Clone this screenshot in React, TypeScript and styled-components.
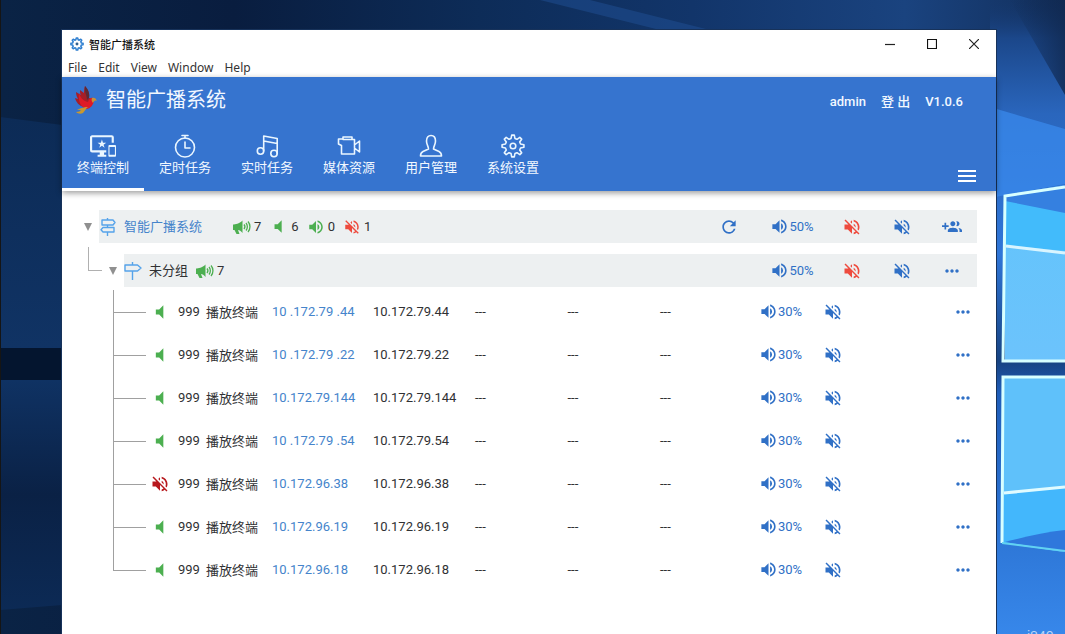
import React from "react";
import styled, { createGlobalStyle } from "styled-components";
import { MdImportantDevices, MdMoreHoriz, MdRefresh, MdVolumeMute, MdVolumeOff, MdVolumeUp } from "react-icons/md";

const BLUE = "#3674cf";
const LINK = "#4584cb";
const ACTION = "#3070c6";
const GREEN = "#4caf50";
const RED = "#ee4b3e";

const GlobalStyle = createGlobalStyle`
  * { box-sizing: border-box; }
  body { margin: 0; font-family: Roboto, "Noto Sans CJK SC", sans-serif; font-size: 13px; color: #303133; }
  button { font: inherit; color: inherit; border: 0; padding: 0; background: none; cursor: pointer; }
  h1 { margin: 0; }
  a { text-decoration: none; }
  svg { display: block; flex: none; }
`;

const Desktop = styled.div`
  position: relative;
  display: flex;
  height: 100vh;
  overflow: hidden;
  padding: 30px 69px 0 62px;
  background: #0a2a56;
`;

const Wallpaper = styled.svg`
  position: absolute;
  inset: 0;
  width: 100%;
  height: 100%;
`;

const Window = styled.main`
  position: relative;
  flex: 1;
  min-width: 0;
  display: flex;
  flex-direction: column;
  background: #fff;
  box-shadow: 0 0 0 1px #17325a;
`;

const TitleBar = styled.div`
  display: flex;
  align-items: center;
  height: 28px;
  padding-left: 8px;
  gap: 5px;
  color: #111;
  font-size: 11px;
  font-weight: 500;
`;

const Title = styled.span`
  flex: 1;
`;

const WindowButtons = styled.div`
  display: flex;
  padding-right: 1px;
`;

const WindowButton = styled.button`
  display: flex;
  align-items: center;
  justify-content: center;
  width: 42px;
  height: 28px;
`;

const MenuBar = styled.nav`
  display: flex;
  align-items: center;
  height: 19px;
  padding-left: 6px;
  gap: 11px;
  font-family: "Noto Sans", "Open Sans", sans-serif;
  font-size: 12px;
  line-height: 18px;
  color: #333;
`;

const Header = styled.header`
  position: relative;
  display: flex;
  flex-direction: column;
  height: 114px;
  background: ${BLUE};
  color: #f2f8ff;
  box-shadow: 0 2px 6px rgba(0, 0, 0, 0.4);
`;

const Brand = styled.div`
  display: flex;
  align-items: center;
  height: 46px;
  padding: 0 33px 0 12px;
`;

const BrandName = styled.h1`
  flex: 1;
  padding-left: 8px;
  font-size: 20px;
  font-weight: 400;
  line-height: 24px;
`;

const Account = styled.div`
  display: flex;
  align-items: baseline;
  gap: 15px;
  font-weight: 500;
`;

const Toolbar = styled.div`
  display: flex;
  flex: 1;
  justify-content: space-between;
`;

const Tabs = styled.div`
  display: flex;
`;

const Tab = styled.button<{ $active?: boolean }>`
  display: flex;
  flex-direction: column;
  align-items: center;
  width: 82px;
  padding-top: 10px;
  line-height: 18px;
  border-bottom: 3px solid ${(p) => (p.$active ? "#fff" : "transparent")};
`;

const MenuToggle = styled.button`
  align-self: flex-end;
  padding: 0 20px 9px;
`;

const Content = styled.section`
  padding: 19px 19px 0 20px;
`;

const GroupRow = styled.div`
  display: flex;
  gap: 5px;
`;

const SubTree = styled.div`
  display: flex;
  gap: 5px;
  margin-top: 4px;
  padding-left: 6px;

  ${GroupRow} {
    flex: 1;
    margin-top: 7px;
  }
`;

const Caret = styled.button`
  width: 12px;
  height: 33px;
  display: flex;
  align-items: center;
  justify-content: center;
`;

const Elbow = styled.span`
  width: 14px;
  height: 24px;
  border-left: 1px solid #b0b0b0;
  border-bottom: 1px solid #b0b0b0;
`;

const Bar = styled.div`
  flex: 1;
  display: flex;
  align-items: center;
  height: 33px;
  background: #edf0f1;
`;

const GroupName = styled.span<{ $link?: boolean }>`
  padding: 0 8px 0 7px;
  line-height: 18px;
  color: ${(p) => (p.$link ? LINK : "#303133")};
`;

const Counts = styled.div<{ $wide?: boolean }>`
  flex: 1;
  display: flex;
  align-items: center;
  gap: 8px;
  padding-left: ${(p) => (p.$wide ? 23 : 0)}px;
`;

const Count = styled.span`
  display: flex;
  align-items: center;
  gap: 3px;
  font-size: 13px;
`;

const Action = styled.button<{ $width?: number; $tone?: string }>`
  display: flex;
  align-items: center;
  justify-content: center;
  width: ${(p) => p.$width ?? 50}px;
  height: 33px;
  color: ${(p) => p.$tone ?? ACTION};
`;

const Devices = styled.table`
  width: calc(100% - 31px);
  margin: 3px 0 0 31px;
  table-layout: fixed;
  border-collapse: collapse;
  td { height: 43px; padding: 0; white-space: nowrap; }
`;

const Branch = styled.div<{ $last: boolean }>`
  height: 43px;
  &::before, &::after { content: ""; display: block; }
  &::before {
    height: 22px;
    border-left: 1px solid #a0a0a0;
    border-bottom: 1px solid #a0a0a0;
  }
  &::after {
    height: 21px;
    border-left: ${(p) => (p.$last ? 0 : 1)}px solid #a0a0a0;
  }
`;

const State = styled.div`
  display: flex;
  padding-left: 4px;
`;

const DeviceLink = styled.a`
  color: ${LINK};
`;

const CellButton = styled.button`
  display: flex;
  align-items: center;
  height: 33px;
  color: ${ACTION};
`;

/** Outline of a cog with the given number of teeth, centred on (c, c). */
function cogPath(teeth: number, c: number, outer: number, inner: number) {
  const step = (Math.PI * 2) / teeth;
  const points: string[] = [];
  for (let i = 0; i < teeth; i++) {
    const middle = i * step - Math.PI / 2;
    const corners: [number, number][] = [
      [-0.32, inner],
      [-0.15, outer],
      [0.15, outer],
      [0.32, inner],
    ];
    corners.forEach(([offset, radius]) => {
      const angle = middle + offset * step;
      points.push(`${(c + radius * Math.cos(angle)).toFixed(2)} ${(c + radius * Math.sin(angle)).toFixed(2)}`);
    });
  }
  return `M${points.join("L")}z`;
}

const AppGear = () => (
  <svg width="14" height="14" viewBox="0 0 24 24" fill="none" stroke="#2f7fd0" strokeWidth="2.6" strokeLinejoin="round">
    <path d={cogPath(8, 12, 10.5, 7.6)} />
    <circle cx="12" cy="12" r="2.5" fill="#2f5f90" stroke="none" />
  </svg>
);

const Phoenix = () => (
  <svg width="24" height="30" viewBox="0 0 24 30">
    <path d="M11 1c-1 3-1 5-1 7L6 5c0 2 0 4 1 5L2 7c0 3 1 5 2 7l-3-1c1 4 4 8 9 9l7-2 2-6-4-1c1-4-1-8-4-12z" fill="#a51e28" />
    <path d="M11 1c3 3 5 7 4 12l-2 2c0-5-3-8-2-14z" fill="#5d2a35" />
    <path d="M5 8c1 4 4 8 9 9 1-3 3-5 5-4l1 3c-1 4-3 7-7 8-6-1-9-7-8-16z" fill="#de1a26" />
    <path d="M18 13c2-1 4 0 5 3-2-1-3 0-4 2-1-1-2-3-1-5z" fill="#c79139" />
    <path d="M14 22c-2 1-3 4-5 6-2 1-5 1-7-1 3 0 4-1 5-2-1 0-3 0-4-1 4 0 6-2 11-2z" fill="#c9982f" />
  </svg>
);

const lineIcon = {
  width: 26,
  height: 26,
  viewBox: "0 0 26 26",
  fill: "none",
  stroke: "#eaf6ff",
  strokeWidth: 1.6,
  strokeLinecap: "round",
  strokeLinejoin: "round",
} as const;

const Stopwatch = () => (
  <svg {...lineIcon}>
    <circle cx="13" cy="14.5" r="9.5" />
    <path d="M10 2.5h6M13 3v2M13 9v6h5" />
  </svg>
);

const Music = () => (
  <svg {...lineIcon}>
    <circle cx="6.5" cy="18" r="3.2" />
    <circle cx="20" cy="20.5" r="3.2" />
    <path d="M9.7 18V3l13.500 2.500v15M9.700 8l13.500 2.500" />
  </svg>
);

const Camera = () => (
  <svg {...lineIcon}>
    <path d="M7 5.500V4h9v2.500h2.500V21H5.500V12.500L2.500 11V6H7M7 6.500h9M18.500 12l5-4v11l-5-4" />
  </svg>
);

const Person = () => (
  <svg {...lineIcon}>
    <path d="M10.500 16c0-3-2-4-2-8 0-4 2-5.500 4.500-5.500s4.500 1.500 4.500 5.500c0 4-2 5-2 8l5.500 2.500c2 1 2.500 2 2.500 4.500H2.500c0-2.500.5-3.500 2.500-4.500z" />
  </svg>
);

const Gear = () => (
  <svg {...lineIcon}>
    <path d={cogPath(8, 13, 11, 7.800)} />
    <circle cx="13" cy="13" r="2.800" />
  </svg>
);

const Megaphone = () => (
  <svg width="18" height="16" viewBox="0 0 18 16">
    <path d="M0 5.500c2.500-.3 6-.5 9.500-4v12.500c-1.500-2-3-2.800-4.500-3L6.500 15H3.500L1.500 11H0z" fill={GREEN} />
    <path d="M11 5.500c1 1.200 1 3.300 0 4.500M13 4c1.800 2 1.800 5.500 0 7.500M15 2.500c2.600 3 2.600 7.500 0 10.500" fill="none" stroke={GREEN} strokeWidth="1.300" />
  </svg>
);

const Signpost = ({ double }: { double?: boolean }) => (
  <svg width="18" height="18" viewBox="0 0 18 18" fill="none" stroke="#55a3ea" strokeWidth="1.4" strokeLinejoin="round">
    {double ? (
      <path d="M8.500 0v2M3 2h11l2 2.500L14 7H3zM8.500 7v2.500M15 9.500H4l-2 2.200L4 14h11zM8.500 14v4" />
    ) : (
      <path d="M8.500 0v3M1 3h12.500L17 6l-3.500 3H1zM8.500 9v9" />
    )}
  </svg>
);

const GroupAdd = () => (
  <svg width="20" height="20" viewBox="0 0 24 24" fill="currentColor">
    <path d="M8 10H5V7H3v3H0v2h3v3h2v-3h3v-2zm10 1c1.660 0 2.990-1.340 2.990-3S19.660 5 18 5c-.32 0-.63.05-.91.14.57.81.9 1.790.9 2.860s-.34 2.040-.9 2.860c.28.09.59.14.91.14zm-5 0c1.660 0 2.990-1.340 2.990-3S14.660 5 13 5s-3 1.340-3 3 1.340 3 3 3zm6.620 2.160c.83.73 1.380 1.660 1.380 2.840v2h3v-2c0-1.540-2.370-2.490-4.380-2.840zM13 13c-2 0-6 1-6 3v2h12v-2c0-2-4-3-6-3z" />
  </svg>
);

const CaretIcon = () => (
  <svg width="10" height="8" viewBox="0 0 10 8">
    <path d="M1 0h8L5 8z" fill="#909090" />
  </svg>
);

const Landscape = () => (
  <Wallpaper viewBox="0 0 1065 634" preserveAspectRatio="none" aria-hidden="true">
    <defs>
      <linearGradient id="sky">
        <stop offset="0" stopColor="#0a2345" />
        <stop offset=".22" stopColor="#091d3f" />
        <stop offset=".45" stopColor="#0d2c58" />
        <stop offset=".65" stopColor="#12356a" />
        <stop offset=".85" stopColor="#1a437f" />
        <stop offset="1" stopColor="#122f5c" />
      </linearGradient>
      <linearGradient id="left" x1="0" y1="0" x2="0" y2="1">
        <stop offset="0" stopColor="#0c2b56" />
        <stop offset="1" stopColor="#103364" />
      </linearGradient>
      <linearGradient id="leftLow" x1="0" y1="0" x2="0" y2="1">
        <stop offset="0" stopColor="#0f3263" />
        <stop offset=".5" stopColor="#0a2145" />
        <stop offset="1" stopColor="#0c2a55" />
      </linearGradient>
      <linearGradient id="right" x1="0" y1="0" x2="0" y2="1">
        <stop offset="0" stopColor="#15376d" stopOpacity="0" />
        <stop offset=".06" stopColor="#1b478a" />
        <stop offset=".18" stopColor="#2a66bd" />
        <stop offset=".4" stopColor="#2f76d8" />
        <stop offset=".57" stopColor="#174382" />
        <stop offset=".62" stopColor="#1f5db9" />
        <stop offset="1" stopColor="#3787ea" />
      </linearGradient>
      <linearGradient id="pane" x1="0" y1="0" x2="0" y2="1">
        <stop offset="0" stopColor="#62c4fb" />
        <stop offset="1" stopColor="#6cc3fc" />
      </linearGradient>
      <linearGradient id="dusk" x1="0" y1="0" x2="1" y2="0">
        <stop offset="0" stopColor="#10284f" stopOpacity="0" />
        <stop offset="1" stopColor="#10284f" stopOpacity=".8" />
      </linearGradient>
    </defs>
    <rect width="1065" height="634" fill="url(#sky)" />
    <path d="M540 0l120 30h50L590 0z" fill="#1f5096" opacity=".5" />
    <path d="M0 117l62 8v223H0z" fill="url(#left)" />
    <path d="M0 348h62v32H0z" fill="#04152f" />
    <path d="M0 380h62v225l-62 5z" fill="url(#leftLow)" />
    <path d="M0 0h1v634H0z" fill="#151515" />
    <path d="M990 0h75v634h-75z" fill="url(#right)" />
    <path d="M1010 0h55v95z" fill="url(#dusk)" />
    <path d="M990 107l75 22v55l-75 14z" fill="#3a8cf0" opacity=".7" />
    <path d="M1005 195l60-10v177h-60z" fill="url(#pane)" />
    <path d="M1005 195l60-10v30l-60-13z" fill="#3580e0" />
    <path d="M1005 201l60 12v38l-60-6z" fill="#42bbfb" />
    <path d="M1006 246l59 7" stroke="#d9f5ff" strokeWidth="3" />
    <path d="M1065 187l-60 9-2 165h62" fill="none" stroke="#d8ffff" strokeWidth="3" />
    <path d="M1003 377h62v175l-62-9z" fill="#5fc1fa" />
    <path d="M1003 493l62-7v66l-62-9z" fill="#43b7fc" />
    <path d="M1005 542c20-5 40-10 60-12v22z" fill="#2f78dc" />
    <path d="M1004 493l61-6" stroke="#e0fbff" strokeWidth="3" />
    <path d="M1065 377h-62l-1 166" fill="none" stroke="#d8ffff" strokeWidth="3" />
    <path d="M1002 543l63 8" stroke="#62d2f2" strokeWidth="2" />
    <text x="1027" y="641" fontSize="14" fontFamily="Liberation Sans, sans-serif" fill="#b8d4f6">i840</text>
  </Wallpaper>
);

const tabs = [
  { label: "终端控制", icon: <MdImportantDevices size={26} color="#eaf6ff" /> },
  { label: "定时任务", icon: <Stopwatch /> },
  { label: "实时任务", icon: <Music /> },
  { label: "媒体资源", icon: <Camera /> },
  { label: "用户管理", icon: <Person /> },
  { label: "系统设置", icon: <Gear /> },
];

const devices = [
  { name: "10 .172.79 .44", ip: "10.172.79.44" },
  { name: "10 .172.79 .22", ip: "10.172.79.22" },
  { name: "10.172.79.144", ip: "10.172.79.144" },
  { name: "10 .172.79 .54", ip: "10.172.79.54" },
  { name: "10.172.96.38", ip: "10.172.96.38", muted: true },
  { name: "10.172.96.19", ip: "10.172.96.19" },
  { name: "10.172.96.18", ip: "10.172.96.18" },
];

const columns = [33, 32, 28, 66, 101, 102, undefined, undefined, 99, 64, 130, 24];

const GroupActions = () => (
  <>
    <Action $width={70}>
      <MdVolumeUp size={19} />
      50%
    </Action>
    <Action $tone={RED} aria-label="静音">
      <MdVolumeOff size={20} />
    </Action>
    <Action aria-label="取消静音">
      <MdVolumeOff size={20} />
    </Action>
  </>
);

export default function App() {
  return (
    <Desktop>
      <GlobalStyle />
      <Landscape />
      <Window>
        <TitleBar>
          <AppGear />
          <Title>智能广播系统</Title>
          <WindowButtons>
            <WindowButton aria-label="最小化">
              <svg width="10" height="10" stroke="#222" strokeWidth="1.2"><path d="M0 5.500h10" /></svg>
            </WindowButton>
            <WindowButton aria-label="最大化">
              <svg width="10" height="10" fill="none" stroke="#111" strokeWidth="1.2"><path d="M.5.5h9v9h-9z" /></svg>
            </WindowButton>
            <WindowButton aria-label="关闭">
              <svg width="10" height="10" stroke="#222" strokeWidth="1.2"><path d="M0 0l10 10M10 0L0 10" /></svg>
            </WindowButton>
          </WindowButtons>
        </TitleBar>
        <MenuBar>
          {["File", "Edit", "View", "Window", "Help"].map((item) => (
            <button key={item}>{item}</button>
          ))}
        </MenuBar>
        <Header>
          <Brand>
            <Phoenix />
            <BrandName>智能广播系统</BrandName>
            <Account>
              <span>admin</span>
              <button>登 出</button>
              <span>V1.0.6</span>
            </Account>
          </Brand>
          <Toolbar>
            <Tabs>
              {tabs.map((tab, i) => (
                <Tab key={tab.label} $active={i === 0}>
                  {tab.icon}
                  {tab.label}
                </Tab>
              ))}
            </Tabs>
            <MenuToggle aria-label="菜单">
              <svg width="18" height="12" stroke="#fff" strokeWidth="2"><path d="M0 1h18M0 6h18M0 11h18" /></svg>
            </MenuToggle>
          </Toolbar>
        </Header>
        <Content>
          <GroupRow>
            <Caret aria-label="收起"><CaretIcon /></Caret>
            <Bar>
              <Signpost double />
              <GroupName $link>智能广播系统</GroupName>
              <Counts $wide>
                <Count><Megaphone />7</Count>
                <Count><MdVolumeMute size={19} color={GREEN} />6</Count>
                <Count><MdVolumeUp size={18} color={GREEN} />0</Count>
                <Count><MdVolumeOff size={18} color={RED} />1</Count>
              </Counts>
              <Action $width={56} aria-label="刷新"><MdRefresh size={20} /></Action>
              <GroupActions />
              <Action aria-label="添加分组"><GroupAdd /></Action>
            </Bar>
          </GroupRow>
          <SubTree>
            <Elbow />
            <GroupRow>
              <Caret aria-label="收起"><CaretIcon /></Caret>
              <Bar>
                <Signpost />
                <GroupName>未分组</GroupName>
                <Counts>
                  <Count><Megaphone />7</Count>
                </Counts>
                <GroupActions />
                <Action aria-label="更多"><MdMoreHoriz size={20} /></Action>
              </Bar>
            </GroupRow>
          </SubTree>
          <Devices>
            <colgroup>
              {columns.map((width, i) => (
                <col key={i} width={width} />
              ))}
            </colgroup>
            <tbody>
              {devices.map((device, i) => (
                <tr key={device.ip}>
                  <td><Branch $last={i === devices.length - 1} /></td>
                  <td>
                    <State>
                      {device.muted ? <MdVolumeOff size={20} color="#b7181d" /> : <MdVolumeMute size={20} color={GREEN} />}
                    </State>
                  </td>
                  <td>999</td>
                  <td>播放终端</td>
                  <td><DeviceLink href="#">{device.name}</DeviceLink></td>
                  <td>{device.ip}</td>
                  <td>---</td>
                  <td>---</td>
                  <td>---</td>
                  <td><CellButton><MdVolumeUp size={19} />30%</CellButton></td>
                  <td><CellButton aria-label="静音"><MdVolumeOff size={20} /></CellButton></td>
                  <td><CellButton aria-label="更多"><MdMoreHoriz size={20} /></CellButton></td>
                </tr>
              ))}
            </tbody>
          </Devices>
        </Content>
      </Window>
    </Desktop>
  );
}
